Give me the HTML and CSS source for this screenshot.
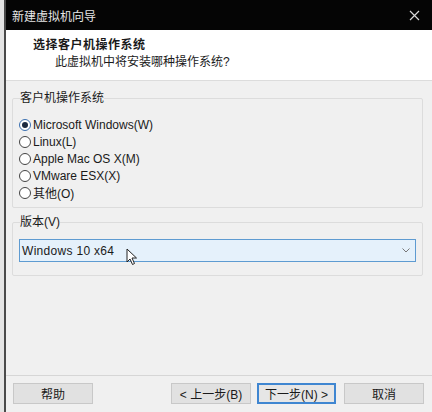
FILE: index.html
```html
<!DOCTYPE html>
<html>
    <head>
        <title>新建虚拟机向导</title>
        <link rel="stylesheet" href="styles.css">
    </head>
    <body>
        <div id="wizard">
            <div class="titlebar">
                <span class="title">新建虚拟机向导</span>
                <span class="close">
                    <svg width="11" height="11" viewBox="0 0 11 11"><path d="M1 1 L10 10 M10 1 L1 10" stroke="#d8d8d8" stroke-width="1.2"/></svg>
                </span>
            </div>
            <div class="header">
                <p class="heading">选择客户机操作系统</p>
                <p class="subheading">此虚拟机中将安装哪种操作系统?</p>
            </div>
            <div class="content">
                <fieldset class="group os-group">
                    <legend>客户机操作系统</legend>
                    <label class="option"><span class="radio checked"></span>Microsoft Windows(W)</label>
                    <label class="option"><span class="radio"></span>Linux(L)</label>
                    <label class="option"><span class="radio"></span>Apple Mac OS X(M)</label>
                    <label class="option"><span class="radio"></span>VMware ESX(X)</label>
                    <label class="option"><span class="radio"></span>其他(O)</label>
                </fieldset>
                <fieldset class="group version-group">
                    <legend>版本(V)</legend>
                    <div class="combo">
                        <span>Windows 10 x64</span>
                        <svg class="arrow" width="8" height="5" viewBox="0 0 8 5"><path d="M0.5 0.5 L4 4 L7.5 0.5" fill="none" stroke="#777" stroke-width="1"/></svg>
                        <svg class="cursor" width="12" height="18" viewBox="0 0 12 18"><path d="M1 1 L1 14 L4 11 L6.5 16.5 L8.5 15.5 L6 10 L10.5 10 Z" fill="#fff" stroke="#222" stroke-width="1"/></svg>
                    </div>
                </fieldset>
            </div>
            <div class="footer">
                <button class="btn">帮助</button>
                <span class="spacer"></span>
                <button class="btn">&lt; 上一步(B)</button>
                <button class="btn default">下一步(N) &gt;</button>
                <button class="btn cancel">取消</button>
            </div>
        </div>
    </body>
</html>
```

FILE: styles.css
```css
body {
    margin: 0;
    background-color: #e4e4e4;
    font-family: "Liberation Sans", "Noto Sans CJK SC", sans-serif;
    font-size: 12px;
    color: #1a1a1a;
}

#wizard {
    margin-left: 4px;
    height: 412px;
    display: flex;
    flex-direction: column;
    background-color: #f0f0f0;
    border-left: 2px solid #4a4a4a;
    box-sizing: border-box;
}

.titlebar {
    height: 30px;
    flex: none;
    display: flex;
    align-items: center;
    justify-content: space-between;
    background-color: #050505;
    color: #e6e6e6;
    padding: 0 12px 0 6px;
}
.titlebar .close {
    display: flex;
}

.header {
    height: 51px;
    flex: none;
    box-sizing: border-box;
    background-color: #fff;
    border-bottom: 1px solid #dcdcdc;
    padding-top: 7px;
}
.header p {
    margin: 0;
}
.heading {
    font-weight: bold;
    padding-left: 27px;
    letter-spacing: 0.5px;
    line-height: 17px;
}
.subheading {
    padding-left: 49px;
    line-height: 17px;
}

.content {
    flex: 1;
    padding: 9px 9px 0 6px;
}

.group {
    margin: 0;
    border: 1px solid #dcdcdc;
    border-radius: 2px;
    padding: 0 6px;
}
.group legend {
    padding: 0;
    margin-left: 1px;
    line-height: 16px;
}

.os-group {
    height: 118px;
    box-sizing: border-box;
    padding-top: 11px;
    margin-bottom: 6px;
}
.option {
    display: flex;
    align-items: center;
    height: 16.8px;
}
.radio {
    width: 12px;
    height: 12px;
    border: 1px solid #444;
    border-radius: 50%;
    background-color: #fff;
    margin-right: 2px;
    box-sizing: border-box;
    display: flex;
    align-items: center;
    justify-content: center;
}
.radio.checked {
    border-color: #3a6fb0;
}
.radio.checked::after {
    content: "";
    width: 6px;
    height: 6px;
    border-radius: 50%;
    background-color: #1b2a40;
}

.version-group {
    height: 62px;
    box-sizing: border-box;
    padding-top: 9px;
}
.combo {
    position: relative;
    height: 23px;
    box-sizing: border-box;
    border: 1px solid #5e9bd1;
    background-color: #e5f1fb;
    display: flex;
    align-items: center;
    justify-content: space-between;
    padding: 0 5px 0 2px;
    letter-spacing: 0.3px;
}
.combo .cursor {
    position: absolute;
    left: 106px;
    top: 8px;
}

.footer {
    height: 35px;
    flex: none;
    border-top: 1px solid #d6d6d6;
    display: flex;
    align-items: center;
    padding: 0 8px 1px 7px;
    gap: 6px;
}
.spacer {
    flex: 1;
}
.btn {
    width: 80px;
    height: 21px;
    border: 1px solid #c8c8c8;
    background-color: #e1e1e1;
    font-family: inherit;
    font-size: 12px;
    color: #1a1a1a;
    padding: 0;
}
.btn.default {
    border: 2px solid #3f86d1;
    background-color: #e6e6e6;
    width: 79px;
}
.btn.cancel {
    margin-left: 2px;
}
```
